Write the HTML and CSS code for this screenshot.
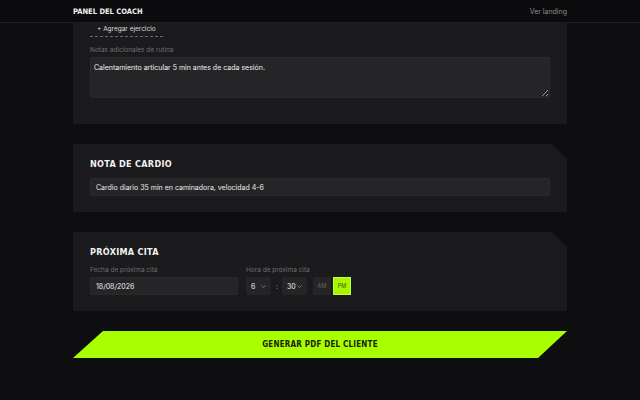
FILE: index.html
```html
<!DOCTYPE html>
<html>
<head>
  <title>Panel del Coach</title>
  <link rel="stylesheet" href="styles.css">
</head>
<body>
  <header class="topbar">
    <div class="topbar-inner">
      <span class="brand">PANEL DEL COACH</span>
      <a class="link" href="#">Ver landing</a>
    </div>
  </header>

  <main class="page">
    <section class="card card-routine">
      <button class="add-btn">+ Agregar ejercicio</button>
      <label class="field-label">Notas adicionales de rutina</label>
      <textarea class="textarea">Calentamiento articular 5 min antes de cada sesión.</textarea>
    </section>

    <section class="card card-cut">
      <h2 class="card-title">NOTA DE CARDIO</h2>
      <input class="input" type="text" value="Cardio diario 35 min en caminadora, velocidad 4-6">
    </section>

    <section class="card card-cut">
      <h2 class="card-title">PRÓXIMA CITA</h2>
      <div class="row">
        <div class="col-date">
          <label class="field-label">Fecha de próxima cita</label>
          <input class="input" type="text" value="18/08/2026">
        </div>
        <div class="col-time">
          <label class="field-label">Hora de próxima cita</label>
          <div class="time">
            <div class="select">
              <span>6</span>
              <svg class="chev" width="5" height="3" viewBox="0 0 5 3"><path d="M0.5 0.5 L2.5 2.5 L4.5 0.5" fill="none" stroke="#8a8a8d" stroke-width="0.8"/></svg>
            </div>
            <span class="colon">:</span>
            <div class="select">
              <span>30</span>
              <svg class="chev" width="5" height="3" viewBox="0 0 5 3"><path d="M0.5 0.5 L2.5 2.5 L4.5 0.5" fill="none" stroke="#8a8a8d" stroke-width="0.8"/></svg>
            </div>
            <div class="ampm-group">
              <button class="ampm">AM</button>
              <button class="ampm active">PM</button>
            </div>
          </div>
        </div>
      </div>
    </section>

    <button class="generate">GENERAR PDF DEL CLIENTE</button>
  </main>
</body>
</html>
```

FILE: styles.css
```css
body {
  margin: 0;
  background: #0e0e10;
  color: #e4e4e4;
  font-family: Inter, "Noto Sans", sans-serif;
  font-size: 7px;
}

.topbar {
  height: 22px;
  background: #0b0b0d;
  border-bottom: 1px solid #1e1e21;
}

.topbar-inner {
  width: 494px;
  margin: 0 auto;
  height: 22px;
  display: flex;
  align-items: center;
  justify-content: space-between;
}

.brand {
  font-family: "Liberation Sans Narrow", "DejaVu Sans Condensed", sans-serif;
  font-weight: bold;
  font-size: 7.5px;
  color: #f2f2f2;
}

.link {
  color: #8d8d90;
  text-decoration: none;
  font-size: 7px;
}

.page {
  width: 494px;
  margin: 0 auto;
  display: flex;
  flex-direction: column;
  gap: 20px;
  padding-bottom: 40px;
}

.card {
  background: #1b1b1d;
  padding: 15px 17px 16px;
}

.card-routine {
  padding-top: 0;
  padding-bottom: 26px;
}

.card-cut {
  clip-path: polygon(0 0, calc(100% - 15px) 0, 100% 15px, 100% 100%, 0 100%);
}

.card-title {
  margin: 0 0 9px;
  font-family: "Liberation Sans Narrow", "DejaVu Sans Condensed", sans-serif;
  font-weight: bold;
  font-size: 9px;
  letter-spacing: 0.3px;
  color: #f2f2f2;
}

.add-btn {
  display: block;
  background: none;
  border: none;
  border-bottom: 1px dashed #6a6a6d;
  color: #dcdcdc;
  font-family: inherit;
  font-size: 6.5px;
  padding: 2px 7px 3px;
  margin-bottom: 9px;
}

.field-label {
  display: block;
  color: #6f6f73;
  font-size: 6.5px;
  margin-bottom: 3px;
}

.textarea {
  display: block;
  box-sizing: border-box;
  width: 100%;
  height: 41px;
  background: #252527;
  border: 1px solid #2c2c2f;
  border-radius: 2px;
  color: #f0f0f0;
  font-family: inherit;
  font-size: 7px;
  padding: 5px 3px;
  resize: vertical;
}

.input {
  display: block;
  box-sizing: border-box;
  width: 100%;
  height: 18px;
  background: #252527;
  border: 1px solid #2a2a2d;
  border-radius: 2px;
  color: #ececec;
  font-family: inherit;
  font-size: 7px;
  padding: 0 5px;
}

.row {
  display: flex;
  gap: 8px;
}

.col-date {
  width: 148px;
}

.time {
  display: flex;
  align-items: center;
  gap: 5px;
}

.select {
  box-sizing: border-box;
  width: 25px;
  height: 18px;
  background: #252527;
  border-radius: 2px;
  display: flex;
  align-items: center;
  justify-content: space-between;
  padding: 0 5px 0 5px;
  color: #ececec;
}

.chev {
  display: block;
}

.colon {
  color: #8a8a8d;
  width: 1px;
  text-align: center;
}

.ampm-group {
  display: flex;
  gap: 2px;
  margin-left: 1px;
}

.ampm {
  width: 18px;
  height: 18px;
  border: none;
  padding: 0;
  background: #252527;
  color: #6a6a6d;
  font-family: inherit;
  font-size: 5.5px;
}

.ampm.active {
  background: #a8f500;
  color: #3c5a00;
  border: 1px solid #c5ff3a;
}

.generate {
  height: 27px;
  border: none;
  background: #a8ff00;
  color: #1a2200;
  font-family: "Liberation Sans Narrow", "DejaVu Sans Condensed", sans-serif;
  font-weight: bold;
  font-size: 8px;
  letter-spacing: 0.2px;
  clip-path: polygon(30px 0, 100% 0, calc(100% - 29px) 100%, 0 100%);
}
```
